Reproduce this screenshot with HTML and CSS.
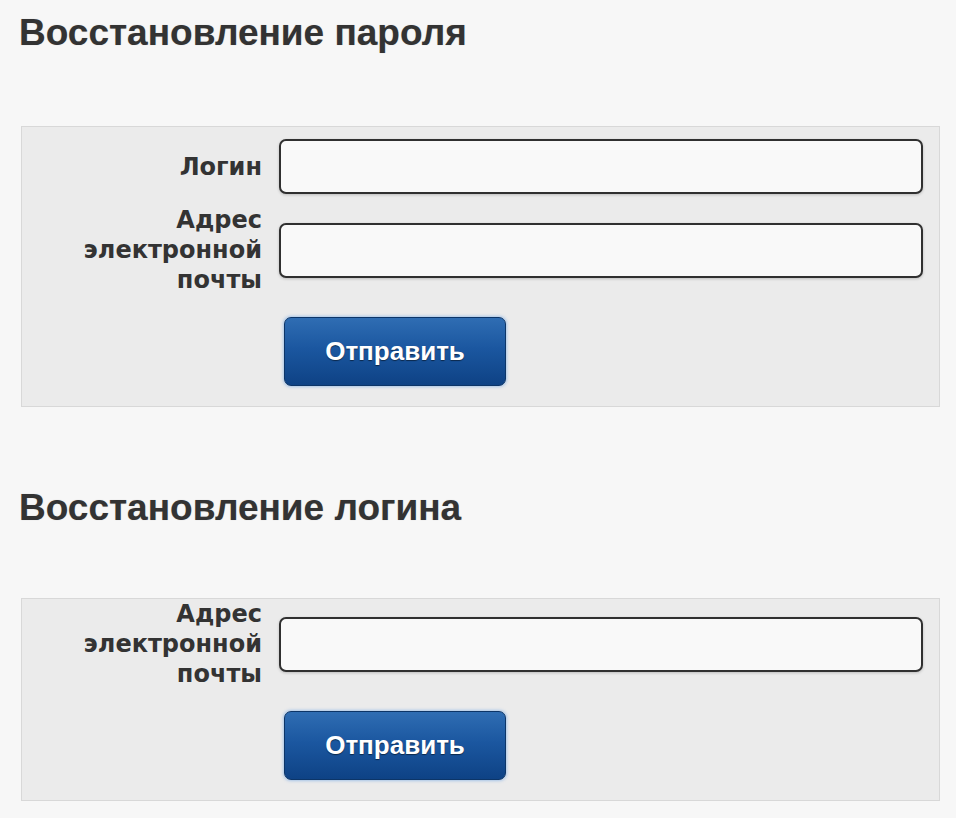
FILE: index.html
```html
<!DOCTYPE html>
<html lang="ru">
<head>
<meta charset="utf-8">
<title>Восстановление</title>
<link rel="stylesheet" href="styles.css">
</head>
<body>
<div class="page">
  <h1 class="title first">Восстановление пароля</h1>
  <form class="panel">
    <div class="row">
      <label class="label">Логин</label>
      <input class="field" type="text">
    </div>
    <div class="row">
      <label class="label multi">Адрес электронной почты</label>
      <input class="field" type="text">
    </div>
    <div class="row">
      <span></span>
      <button class="btn" type="button">Отправить</button>
    </div>
  </form>

  <h1 class="title second">Восстановление логина</h1>
  <form class="panel">
    <div class="row">
      <label class="label multi">Адрес электронной почты</label>
      <input class="field" type="text">
    </div>
    <div class="row">
      <span></span>
      <button class="btn" type="button">Отправить</button>
    </div>
  </form>
</div>
</body>
</html>
```
FILE: styles.css
```css
html, body {
  margin: 0;
  padding: 0;
  background: #f7f7f7;
}
.page {
  padding: 0 16px 0 21px;
}
.title {
  font-family: "Liberation Sans", Arial, sans-serif;
  font-weight: bold;
  font-size: 37px;
  line-height: 44px;
  color: #333;
  margin: 0 0 71px -2px;
  text-shadow: 0 0 1px rgba(0,0,0,0.25);
}
.title.first {
  padding-top: 11px;
}
.title.second {
  margin-top: 79px;
  margin-bottom: 68px;
}
.panel {
  background: #ebebeb;
  border: 1px solid #d8d8d8;
  padding: 12px 16px 20px 0;
  display: grid;
  row-gap: 23px;
}
.row {
  display: grid;
  grid-template-columns: 240px 1fr;
  column-gap: 17px;
  align-items: center;
}
.row:last-child {
  margin-top: 11px;
}
.label {
  font-family: "DejaVu Sans", Verdana, sans-serif;
  font-weight: bold;
  font-size: 24px;
  line-height: 30px;
  color: #333;
  text-align: right;
}
.label.multi {
  margin: -12px 0 -12px 40px;
}
.field {
  box-sizing: border-box;
  height: 55px;
  width: 100%;
  margin: 0;
  border: 2px solid #303030;
  border-radius: 7px;
  background: #f9f9f9;
  box-shadow: 0 1px 3px rgba(0,0,0,0.2);
}
.btn {
  justify-self: start;
  margin-left: 5px;
  width: 222px;
  height: 69px;
  border: 1px solid #0c3568;
  border-radius: 7px;
  background: linear-gradient(#2f6db3 0%, #1b57a0 45%, #0e4285 100%);
  box-shadow: 0 0 3px 1px rgba(120,170,230,0.6);
  color: #fff;
  font-family: "Liberation Sans", Arial, sans-serif;
  font-weight: bold;
  font-size: 26px;
  text-shadow: 0 1px 1px rgba(0,0,0,0.5);
  padding: 0;
  cursor: pointer;
}
```
